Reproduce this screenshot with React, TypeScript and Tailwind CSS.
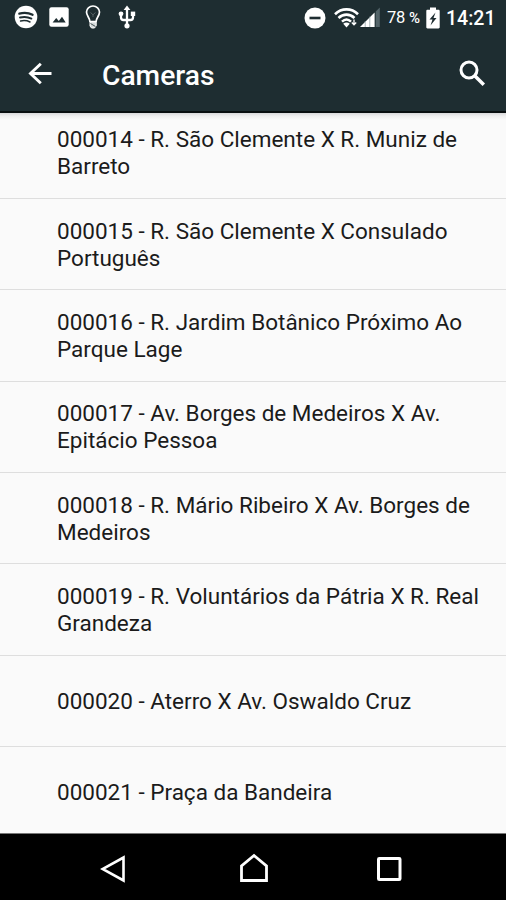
import React from "react";

const cameras: string[][] = [
  ["000014 - R. São Clemente X R. Muniz de", "Barreto"],
  ["000015 - R. São Clemente X Consulado", "Português"],
  ["000016 - R. Jardim Botânico Próximo Ao", "Parque Lage"],
  ["000017 - Av. Borges de Medeiros X Av.", "Epitácio Pessoa"],
  ["000018 - R. Mário Ribeiro X Av. Borges de", "Medeiros"],
  ["000019 - R. Voluntários da Pátria X R. Real", "Grandeza"],
  ["000020 - Aterro X Av. Oswaldo Cruz"],
  ["000021 - Praça da Bandeira"],
];

function NotificationIcons() {
  return (
    <div className="flex items-center pb-[2px]">
      <svg className="ml-[14px] h-6 w-6" viewBox="0 0 24 24" fill="none">
        <circle cx="12" cy="12" r="11.3" fill="#fff" />
        <g stroke="#1e2d31" strokeLinecap="round">
          <path d="M5.3 8.6c4.5-1.2 9.500-.8 13.300 1.200" strokeWidth="2.200" />
          <path d="M6 12.500c4-1 8-.6 11.400 1.100" strokeWidth="1.900" />
          <path d="M6.600 16c3.300-.7 6.600-.4 9.400 1" strokeWidth="1.500" />
        </g>
      </svg>
      <svg className="ml-[11px] h-5 w-5" viewBox="0 0 20 20">
        <rect x=".3" y=".3" width="19.400" height="19.400" rx="2.200" fill="#fff" />
        <path d="M3.600 15.500 7.200 11l2.600 3 3.200-4.200 3.700 5.700z" fill="#1e2d31" />
      </svg>
      <svg className="ml-[16px] h-6 w-4" viewBox="0 0 16 24" fill="none" stroke="#fff">
        <path d="M4.900 16.500C4.900 12.800 1.500 11 1.500 7a6.500 6 0 0 1 13 0c0 4-3.300 5.800-3.400 9.500z" strokeWidth="1.700" />
        <path d="M5.500 7.500 8 9.800l2.500-2.300M8 9.800V12" strokeWidth=".8" opacity=".3" />
        <path d="M5 17.200h6.200v3.600L9.500 23h-3L5 21z" fill="#d5dadb" strokeWidth="1" />
        <path d="m5.500 18.500 5 3" stroke="#1e2d31" strokeWidth=".8" />
      </svg>
      <svg className="ml-[17px] h-6 w-[18px]" viewBox="0 0 18 24" fill="none" stroke="#fff">
        <path d="M9 4v17M3 9v3.500c0 1.500 1 2.500 2.500 2.500h7c1.500 0 2.500-1 2.500-2.500V8" strokeWidth="2.300" />
        <path d="M9 .6 12.400 5H5.600z" fill="#fff" stroke="none" />
        <circle cx="9" cy="20.800" r="2.600" fill="#fff" stroke="none" />
        <circle cx="3" cy="8.800" r="2.400" fill="#fff" stroke="none" />
        <path d="M12.800 6.600h4.400v4.400h-4.400z" fill="#fff" stroke="none" />
      </svg>
    </div>
  );
}

function SystemIcons() {
  return (
    <div className="flex items-center pb-px text-white">
      <svg className="h-[22px] w-[22px]" viewBox="0 0 22 22">
        <circle cx="11" cy="11" r="10.500" fill="#fff" />
        <path d="M5.500 9.700h11v2.600h-11z" fill="#1e2d31" />
      </svg>
      <svg className="ml-[8px] h-[22px] w-[25px]" viewBox="0 0 25 22" fill="none" stroke="#fff" strokeWidth="2.600">
        <path d="M1 7.200c6.500-6.400 16.500-6.400 23 0M4.500 11c4.700-4.500 11.300-4.500 16 0M8 14.600c2.800-2.600 6.200-2.600 9 0" />
        <path d="M12.500 20.500 9.200 16.800c2-1.600 4.600-1.600 6.600 0z" fill="#fff" stroke="none" />
        <path d="M20 12.500v5m-2.200-2 2.200 2.300 2.200-2.300" strokeWidth="1.300" />
      </svg>
      <svg className="ml-[1px] h-[21px] w-[21px]" viewBox="0 0 21 21">
        <path d="M14.600 5.500V20H0z" fill="#fff" />
        <path d="M5.200 14v6M9.800 9.500V20" stroke="#87999d" strokeWidth=".7" />
        <path d="M15.700 4.500 19.800.500V20h-4.100z" fill="#526368" />
      </svg>
      <span className="ml-[6px] flex w-[37px] items-baseline whitespace-nowrap pt-px text-[16.500px] leading-6 tracking-[-0.300px]">
        78<span className="ml-[4px] text-[15px] font-medium tracking-[-1px]">%</span>
      </span>
      <svg className="ml-[2px] h-[22px] w-[14px]" viewBox="0 0 14 22">
        <path d="M4 .500h6v2.300h2.500c.7 0 1.200.5 1.200 1.200v16.300c0 .7-.5 1.200-1.200 1.200h-11C.800 21.500.300 21 .300 20.300V4c0-.7.500-1.200 1.200-1.200H4z" fill="#fff" />
        <path d="M9.500 5.500 3.500 12.600h3l-2 6 6-7.600h-3z" fill="#1e2d31" />
      </svg>
      <span className="ml-[6px] w-[60px] whitespace-nowrap pt-[3px] text-[19.500px] font-medium leading-6">14:21</span>
    </div>
  );
}

export default function App() {
  return (
    <div className="flex h-[900px] w-[506px] flex-col overflow-hidden bg-[#fafafa] font-['Roboto',sans-serif]">
      <header className="shrink-0 border-b-2 border-[#080e0f] bg-[#1e2d31] text-white">
        <div className="flex h-9 items-center justify-between">
          <NotificationIcons />
          <SystemIcons />
        </div>
        <div className="flex h-[75px] items-center">
          <svg className="ml-[28px] h-6 w-6" viewBox="0 0 24 24" fill="none" stroke="#fff" strokeWidth="2.900">
            <path d="M23.500 11.500H3M12.800 1.700 2.500 11.500l10.300 9.800" />
          </svg>
          <h1 className="ml-[50px] pt-[5px] text-[28.200px] font-medium leading-8">Cameras</h1>
          <svg className="mr-[20px] mb-px ml-auto h-[27px] w-[27px]" viewBox="0 0 27 27" fill="none" stroke="#fff" strokeWidth="3">
            <circle cx="10" cy="10" r="8" />
            <path d="m15.500 15.500 9.300 9.300" strokeWidth="3.500" />
          </svg>
        </div>
      </header>
      <main className="min-h-0 flex-1 overflow-hidden bg-[linear-gradient(#d8d8da,#eeeeee_3px,#fafafa_7px)]">
        <ul className="-mt-[5.500px]">
          {cameras.map((lines) => (
            <li
              key={lines[0]}
              className="flex h-[91.400px] flex-col justify-center border-b-[1.500px] border-[#dedede] pt-[1px] pl-[57px] text-[22.500px] leading-[27px] text-[#1b1b1b]"
            >
              {lines.map((line) => (
                <span key={line} className="whitespace-nowrap">{line}</span>
              ))}
            </li>
          ))}
        </ul>
      </main>
      <nav className="flex h-[67px] shrink-0 items-center border-t border-[#777777] bg-black">
        <svg className="mt-[3px] ml-[100px] h-7 w-7" viewBox="0 0 28 28" fill="none" stroke="#fff" strokeWidth="2.600">
          <path d="M23.500 2.500v23L2.500 14z" />
        </svg>
        <svg className="mt-[2px] ml-[111px] h-[30px] w-[30px]" viewBox="0 0 30 30" fill="none" stroke="#fff" strokeWidth="2.800">
          <path d="M2.500 27.500V13L15 2.500 27.500 13v14.500z" />
        </svg>
        <svg className="mt-[3px] ml-[107px] h-[26px] w-[26px]" viewBox="0 0 26 26" fill="none" stroke="#fff" strokeWidth="3">
          <rect x="2.500" y="2.500" width="21.500" height="21" rx=".8" />
        </svg>
      </nav>
    </div>
  );
}
